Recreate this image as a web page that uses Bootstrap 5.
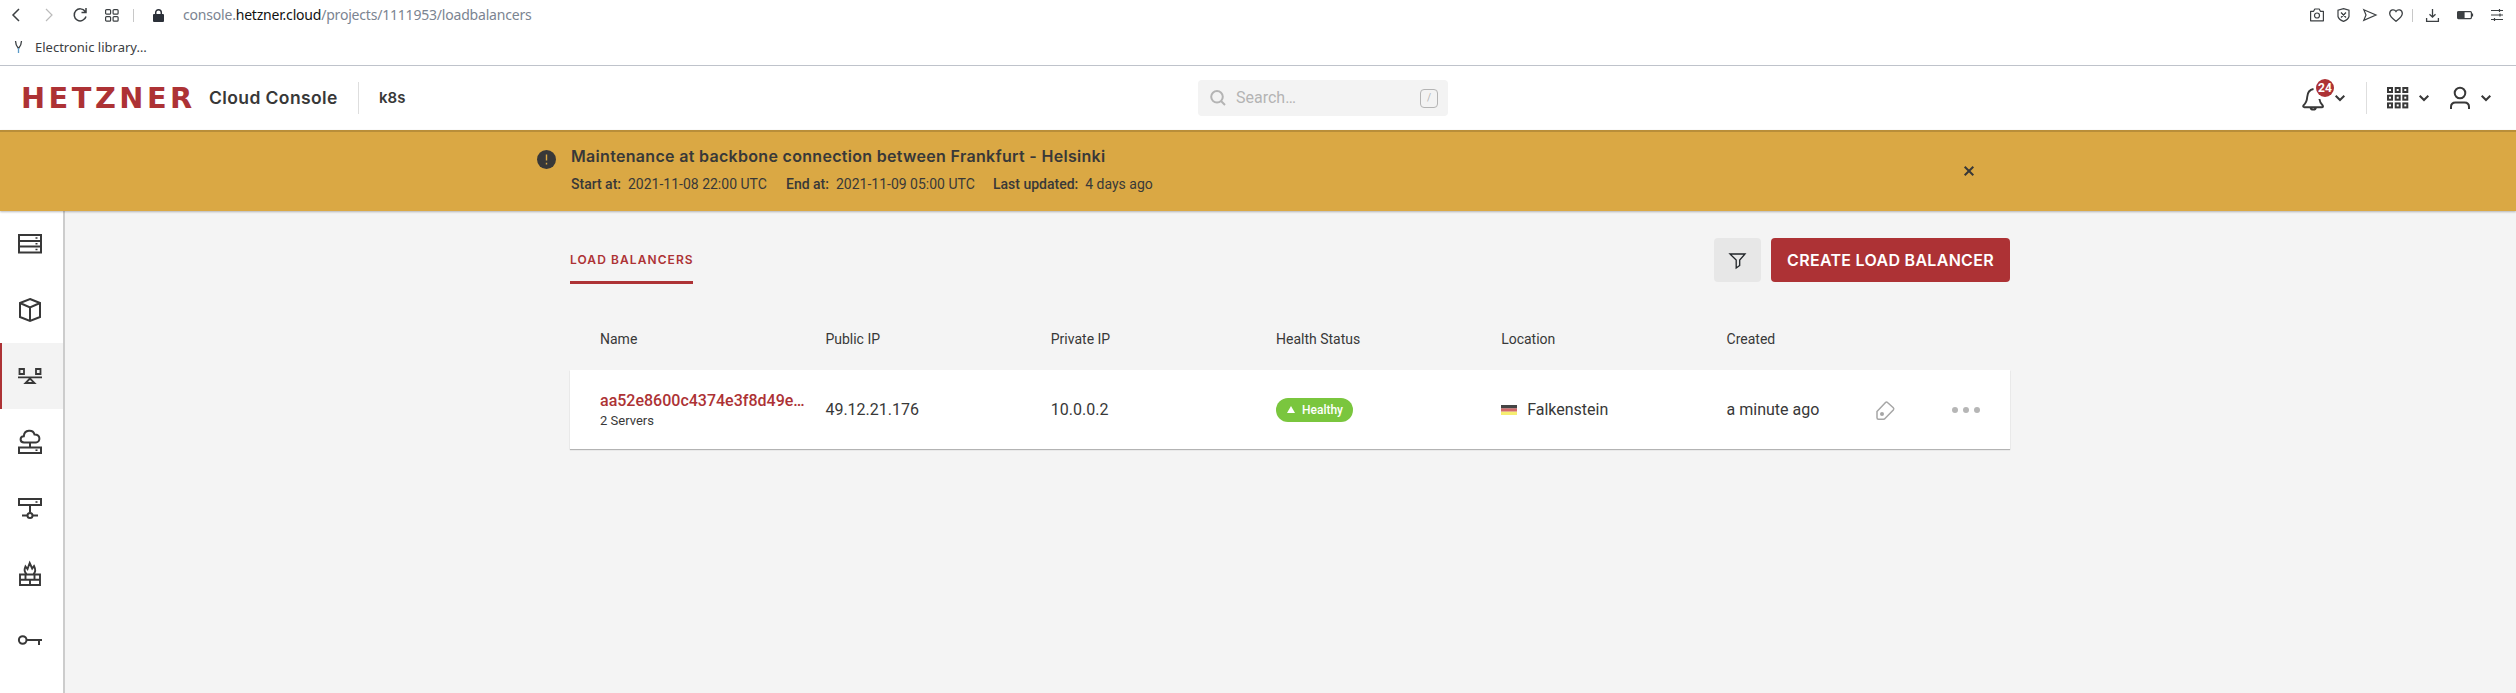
<!DOCTYPE html>
<html lang="en">
<head>
<meta charset="utf-8">
<title>Load Balancers</title>
<link href="https://cdn.jsdelivr.net/npm/bootstrap@5.3.0/dist/css/bootstrap.min.css" rel="stylesheet">
<style>
body{font-family:Roboto,sans-serif;color:#383838;background:#f4f4f4;height:693px;overflow:hidden;font-size:16px;line-height:20px}
svg{display:block;flex:none;fill:none;stroke:currentColor;overflow:visible}
svg.solid{stroke:none}
.t{white-space:nowrap;display:block}
.ubu{font-family:"Noto Sans","Open Sans",sans-serif}
.mont{font-family:Inter,sans-serif}
.chrome{height:66px;background:#fff;border-bottom:1px solid #bfc3cb;color:#3c4043}
.bar1{height:30px;padding-left:12px;padding-right:13px}
.bar2{height:35px;padding-left:15px;padding-bottom:1px}
.vline{width:1px;background:#c8c8c8;height:13px}
.url{font-size:14px;color:#7b8491;letter-spacing:-.2px}
.url b{font-weight:400;color:#111}
.top{height:64px;background:#fff;padding-left:21px;padding-right:25px}
.logo{font-family:"DejaVu Sans",sans-serif;font-weight:700;font-size:28.8px;color:#ad3235;letter-spacing:3.5px;width:188px}
.console{font-size:17.5px;font-weight:600;width:149px;letter-spacing:.4px}
.hline{width:1px;height:32px;background:#dedede}
.search{width:250px;height:36px;background:#f3f3f3;border-radius:4px;color:#b4b4b4;padding:0 10px 0 12px}
.key{width:18px;height:19px;border:1px solid #b4b4b4;border-radius:4px;font-size:10px;line-height:16px;text-align:center}
.bell{position:relative}
.count{position:absolute;left:14px;top:-6px;width:18px;height:18px;border-radius:50%;background:#ad3235;color:#fff;font-size:12px;font-weight:700;line-height:18px;text-align:center}
.notice{height:81px;background:#daa844;border-top:2px solid #b98e39;box-shadow:0 1px 2px #0004;position:relative;padding:14px 536px 0 537px}
.notice h1{font-size:16px;font-weight:600;line-height:20px;margin:0;letter-spacing:.31px}
.notice .meta{font-size:14px;margin-top:9px;line-height:18px}
.notice b,.fw5{font-weight:500}
.rail{width:65px;background:#fff;border-right:2px solid #ccc}
.rail a{height:66px;color:#383838;padding-right:3px}
.rail a.on{background:#f3f3f3;box-shadow:inset 2px 0 #ad3235}
.page{width:1440px;margin-left:505px;padding-top:27px}
.tab{font-size:12px;font-weight:600;color:#ad3235;border-bottom:3px solid #ad3235;height:46px;line-height:44px;width:123px}
.tab span{letter-spacing:1.08px}
.filter{width:47px;height:44px;background:#e7e7e7;border-radius:4px;padding:0}
.create,.create:hover{width:239px;height:44px;background:#ad3235;color:#fff;border-radius:4px;font-weight:600;font-size:16px;letter-spacing:.3px;padding:0}
.cols{display:grid;grid-template-columns:225.4px 225.4px 225.2px 225.2px 225.4px 149px 1fr;padding-left:30px;align-items:center}
.heads{height:62px;margin-top:24px;font-size:14px}
.entry{height:79px;background:#fff;box-shadow:0 1px 1px #0004}
.healthy{width:77px;height:24px;border-radius:12px;background:#7ac63e;color:#fff;font-size:12px;font-weight:500;padding-left:11px;gap:7px}
</style>
</head>
<body class="d-flex flex-column">
<header class="chrome ubu">
 <div class="bar1 d-flex align-items-center">
  <svg width="8" height="14" stroke-width="1.5"><path d="M7 1 1 7l6 6"/></svg>
  <svg width="8" height="14" stroke-width="1.2" style="margin-left:25px;color:#bbb"><path d="m1 1 6 6-6 6"/></svg>
  <svg width="14" height="14" stroke-width="1.5" style="margin-left:20px"><path d="M12.2 3.5A6 6 0 1 0 13 8.5M13 0v4.5H8.500"/></svg>
  <svg width="14" height="13" stroke-width="1.2" style="margin-left:18px"><rect x=".6" y=".6" width="5" height="4.600" rx="1"/><rect x="8.100" y=".6" width="5" height="4.600" rx="1"/><rect x=".6" y="7.600" width="5" height="4.600" rx="1"/><rect x="8.100" y="7.600" width="5" height="4.600" rx="1"/></svg>
  <span class="vline" style="margin-left:14px"></span>
  <svg width="11" height="13" style="margin-left:19px;color:#2b3038"><rect y="5" width="11" height="8" rx="1" fill="currentColor" stroke="none"/><path d="M2.700 6V3.500a2.800 2.800 0 0 1 5.600 0V6" stroke-width="1.500"/></svg>
  <span class="t url" style="margin-left:19px">console.<b>hetzner.cloud</b>/projects/1111953/loadbalancers</span>
  <div class="ms-auto d-flex align-items-center">
   <svg width="14" height="14" stroke-width="1.2"><path d="M.6 3.300h3L4.800 1h4.400l1.200 2.300h3v9.500H.6z" stroke-linejoin="round"/><circle cx="7" cy="7.500" r="2.500"/></svg>
   <svg width="13" height="14" stroke-width="1.200" style="margin-left:13px"><path d="M6.500.6 12 2.300v6.200q-.7 3-5.500 4.900Q1.700 11.500 1 8.500V2.300zM4 4.500l5 5m0-5-5 5"/></svg>
   <svg width="14" height="12" stroke-width="1.200" style="margin-left:13px"><path d="M.8.700 13 6 .8 11.300 3 6z"/></svg>
   <svg width="14" height="13" stroke-width="1.300" style="margin-left:12px"><path d="M7 2.500C5.500-.2.700.300.700 4.500.7 7.500 4 10 7 12.300c3-2.300 6.300-4.800 6.300-7.800 0-4.200-4.800-4.700-6.300-2z"/></svg>
   <span class="vline" style="margin-left:9px"></span>
   <svg width="13" height="13" stroke-width="1.300" style="margin-left:13px"><path d="M6.500 0v8M3.500 5.200l3 3 3-3M.6 9v3.300h11.800V9"/></svg>
   <svg width="16" height="8" stroke-width="1.200" style="margin-left:18px"><rect x=".6" y=".6" width="13.800" height="7" rx="1"/><path d="M1 1h6v6H1z" fill="currentColor"/><path d="M15.500 2.500v3"/></svg>
   <svg width="12" height="12" stroke-width="1.200" style="margin-left:18px"><path d="M0 1.500h12M0 6h12M0 10.500h12M8.500 0v3M9 4.500v3M3.500 9v3"/></svg>
  </div>
 </div>
 <div class="bar2 d-flex align-items-center">
  <svg width="7" height="12" stroke-width="1.300"><path d="M.5 0q0 4 3 7.500M6.500 0q0 4-3 7.500"/><path d="M3.500 7v5" stroke="#5b9ac8"/></svg>
  <span class="t" style="font-size:13px;margin-left:13px">Electronic library…</span>
 </div>
</header>
<nav class="top d-flex align-items-center">
 <div class="d-flex align-items-center" style="width:1177px">
  <span class="t logo">HETZNER</span><span class="t console mont">Cloud Console</span>
  <span class="hline"></span><span class="t mont" style="font-weight:600;font-size:15px;margin-left:20px">k8s</span>
 </div>
 <div class="search d-flex align-items-center">
  <svg width="16" height="16" stroke-width="2"><circle cx="7" cy="6.800" r="5.800"/><path d="m11 11 4 4"/></svg>
  <span class="t" style="margin-left:10px">Search…</span><span class="key ms-auto">/</span>
 </div>
 <div class="ms-auto d-flex align-items-center">
  <div class="bell"><svg width="22" height="24" stroke-width="1.900" style="margin-top:2px"><path d="M11.500 2C7 2.800 5.500 5.500 5.200 10c-.2 4-1 6-3.800 8.500-.6 1.200 0 1.700 1 1.700h17.500c1 0 1.500-.8.800-1.700-2-2-3-4-3.300-6.500M8.500 20.500c.5 2.800 5 2.800 5.500 0"/></svg><span class="count">24</span></div>
  <svg width="10" height="6" stroke-width="2" style="margin-left:11px"><path d="m.7.700 4.300 4.300L9.300.700"/></svg>
  <span class="hline" style="margin-left:21px"></span>
  <svg width="22" height="22" stroke-width="2" style="margin-left:20px"><g id="sq"><rect x="1" y="1" width="4" height="4"/><rect x="8.700" y="1" width="4" height="4"/><rect x="16.300" y="1" width="4" height="4"/></g><use href="#sq" y="7.700"/><use href="#sq" y="15.400"/></svg>
  <svg width="10" height="6" stroke-width="2" style="margin-left:10px"><path d="m.7.700 4.300 4.300L9.300.700"/></svg>
  <svg width="20" height="22" stroke-width="2" style="margin-left:21px"><circle cx="10" cy="6" r="5.300"/><path d="M1 22v-2c0-3 2-4.500 4.500-4.500h9c2.500 0 4.500 1.500 4.500 4.500v2"/></svg>
  <svg width="10" height="6" stroke-width="2" style="margin-left:11px"><path d="m.7.700 4.300 4.300L9.300.700"/></svg>
 </div>
</nav>
<section class="notice d-flex">
 <svg width="19" height="19" style="margin-top:4px"><circle cx="9.500" cy="9.500" r="9.500" fill="currentColor" stroke="none"/><path d="M9.500 4.500v6M9.500 12.800v1.700" stroke="#daa844" stroke-width="1.400"/></svg>
 <div style="margin-left:15px">
  <h1 class="t mont">Maintenance at backbone connection between Frankfurt - Helsinki</h1>
  <div class="meta d-flex"><span class="t" style="width:215px"><b>Start at:</b>&nbsp; 2021-11-08 22:00 UTC</span><span class="t" style="width:207px"><b>End at:</b>&nbsp; 2021-11-09 05:00 UTC</span><span class="t"><b>Last updated:</b>&nbsp; 4 days ago</span></div>
 </div>
 <svg class="ms-auto" width="10" height="10" stroke-width="2" style="margin-top:20px;margin-right:6px"><path d="m.7.700 8.600 8.600m0-8.600L.7 9.300"/></svg>
</section>
<div class="d-flex flex-grow-1">
 <aside class="rail flex-shrink-0">
  <a class="d-flex align-items-center justify-content-center"><svg width="24" height="20" stroke-width="2"><path d="M1 1h22v17.500H1zM1 7h22M1 12.500h22" /><path d="M17.500 4h2M17.500 9.800h2M17.500 15.500h2" stroke-width="1.600"/></svg></a>
  <a class="d-flex align-items-center justify-content-center"><svg width="22" height="24" stroke-width="2"><path d="m11 1 10 4v14l-10 4-10-4V5zM1 5l10 4.500L21 5M11 9.500V23"/></svg></a>
  <a class="on d-flex align-items-center justify-content-center"><svg width="24" height="16" stroke-width="1.800"><path d="M1.500 1h4.500v5H1.500zM18 1h4.500v5H18zM0 9.300h24M12 10.500 7.500 15h9z"/></svg></a>
  <a class="d-flex align-items-center justify-content-center"><svg width="24" height="24" stroke-width="2"><path d="M1 17.500h22V23H1zM12 12.500v5M6 12.500c-4.500-.2-4.500-6-.2-6.300C6.300-.5 15-.8 16.500 4.500c6-.2 6.500 7.500 1.500 8z"/><path d="M17.500 20.200h2" stroke-width="1.600"/></svg></a>
  <a class="d-flex align-items-center justify-content-center"><svg width="24" height="20" stroke-width="2"><path d="M1 1h22v6H1zM12 7v7.500M4 17.500h5.500M14.500 17.500H20"/><circle cx="12" cy="17.500" r="2.500"/><path d="M17.500 4h2" stroke-width="1.600"/></svg></a>
  <a class="d-flex align-items-center justify-content-center"><svg width="22" height="24" stroke-width="1.900"><path d="M1 12.500h20V23H1zM1 17.700h20M6.500 12.500v5M15.500 12.500v5M11 17.500V23M7.500 12C4 9 6 6 6.500 4.500L8.500 7l2.200-6 2.500 5.500L15 4c1.500 3 2.500 5.500-.5 8"/></svg></a>
  <a class="d-flex align-items-center justify-content-center"><svg width="24" height="11" stroke-width="2"><circle cx="4.700" cy="5" r="3.800"/><path d="M8.500 5H24M21 5v5"/></svg></a>
 </aside>
 <main class="page">
  <div class="d-flex">
   <div class="t tab mont"><span>LOAD BALANCERS</span></div>
   <button class="btn filter ms-auto d-flex align-items-center justify-content-center"><svg width="17" height="16" stroke-width="1.300" style="margin-top:2px"><path d="M1 1h15l-5.300 6v5.500L7.200 15V7z"/></svg></button>
   <button class="btn create mont t" style="margin-left:10px">CREATE LOAD BALANCER</button>
  </div>
  <div class="cols heads"><span>Name</span><span>Public IP</span><span>Private IP</span><span>Health Status</span><span>Location</span><span>Created</span></div>
  <div class="cols entry">
   <div style="padding-top:3px"><span class="t fw5" style="color:#ad3235">aa52e8600c4374e3f8d49e…</span><span class="t" style="font-size:13px">2 Servers</span></div>
   <span>49.12.21.176</span><span>10.0.0.2</span>
   <span class="healthy d-flex align-items-center"><svg class="solid" width="8" height="7"><path d="M4 0 8 7H0z" fill="currentColor"/></svg>Healthy</span>
   <span class="d-flex align-items-center"><svg class="solid" width="16" height="10"><path d="M0 0h16v3.500H0z" fill="#444"/><path d="M0 3.400h16v3.300H0z" fill="#d2696a"/><path d="M0 6.700h16V10H0z" fill="#f6ee70"/></svg><span style="margin-left:10px">Falkenstein</span></span>
   <span>a minute ago</span>
   <span class="d-flex align-items-center" style="color:#a6a6a6;padding-top:2px"><svg width="19" height="19" stroke-width="1.500"><path d="M1 10.500 9.500 1.500q1-1 2 0l5.800 5.200q1 1 0 2.200L9 17.500q-.5.700-1.500.7H2.500Q1 18.200 1 16.700z"/><circle cx="6" cy="13" r="2" fill="currentColor" stroke="none"/></svg>
   <svg class="solid" width="29" height="6" style="margin-left:57px;margin-top:-2px"><g fill="#b6b6b6"><circle cx="3" cy="3" r="3"/><circle cx="14" cy="3" r="3"/><circle cx="25" cy="3" r="3"/></g></svg></span>
  </div>
 </main>
</div>
<script src="https://cdn.jsdelivr.net/npm/bootstrap@5.3.0/dist/js/bootstrap.bundle.min.js"></script>
</body>
</html>
